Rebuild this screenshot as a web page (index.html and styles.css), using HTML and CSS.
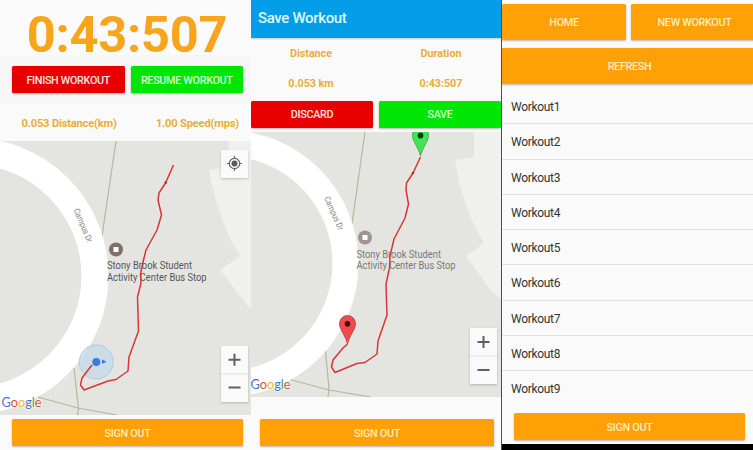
FILE: index.html
```
<!DOCTYPE html>
<html lang="en">
<head>
<meta charset="utf-8">
<title>Workout</title>
<link rel="stylesheet" href="styles.css">
</head>
<body>
<main class="screens">
  <section class="screen tracking">
    <div class="timer">0:43:507</div>
    <div class="actions">
      <button class="btn red"><span>FINISH WORKOUT</span></button>
      <button class="btn green"><span>RESUME WORKOUT</span></button>
    </div>
    <div class="stats"><span>0.053 Distance(km)</span><span>1.00 Speed(mps)</span></div>
    <svg class="map" viewBox="0 141 251 274" width="251" height="274">
      <rect class="land" x="0" y="141" width="251" height="274"/>
      <path class="plot" d="M229 141H251V310L220 270L240 256Q217 218 209 170L229 167Z"/>
      <path class="path" d="M116 141L102 236M74 368L78.500 409L77.500 415M38 397L78 408L117 415"/>
      <circle class="road" cx="-30" cy="276" r="125"/>
      <text class="street" transform="translate(73.500 210) rotate(67)" textLength="36" lengthAdjust="spacingAndGlyphs">Campus Dr</text>
      <circle class="stop" cx="116" cy="249.500" r="7"/>
      <rect class="stop-mark" x="113.500" y="247" width="5" height="5"/>
      <text class="place" x="107" y="269" textLength="85" lengthAdjust="spacingAndGlyphs">Stony Brook Student</text>
      <text class="place" x="107" y="280.500" textLength="99.500" lengthAdjust="spacingAndGlyphs">Activity Center Bus Stop</text>
      <circle class="accuracy" cx="96.300" cy="362" r="17"/>
      <path class="route" d="M173.500 165L165.500 183L159 193L158 200L161.500 215L157 230L146 250L143 262L140.500 274L141 283L137.500 297L138.500 331L129 357L128 371L116 379.500L108 381L84 390L80.500 385L82 378L92 365"/>
      <circle class="turn" cx="165.700" cy="182.500" r="1.300"/>
      <circle class="me" cx="96.300" cy="362" r="4"/>
      <path class="heading" d="M102 359.500L106.500 361.700L102 364Z"/>
      <text class="google" x="1.500" y="407" textLength="40" lengthAdjust="spacingAndGlyphs"><tspan class="gb">G</tspan><tspan class="gr">o</tspan><tspan class="gy">o</tspan><tspan class="gb">g</tspan><tspan class="gg">l</tspan><tspan class="gr">e</tspan></text>
      <g class="control">
        <rect x="221" y="150" width="27" height="28"/>
        <g class="locate"><circle cx="234.500" cy="163.500" r="5.200"/><path d="M234.500 156V159M234.500 168V171M227 163.500H230M239 163.500H242"/></g>
        <circle class="locate-dot" cx="234.500" cy="163.500" r="3"/>
      </g>
      <g class="control">
        <rect x="221" y="346" width="27" height="56"/>
        <path class="split" d="M221 374H248"/>
        <path class="sign" d="M228.500 359.700H240.500M234.500 353.700V365.700M228.500 387.500H240.500"/>
      </g>
    </svg>
    <div class="footer"><button class="btn orange"><span>SIGN OUT</span></button></div>
  </section>

  <section class="screen save">
    <header class="bar">Save Workout</header>
    <div class="summary">
      <span>Distance</span><span>Duration</span>
      <span>0.053 km</span><span>0:43:507</span>
    </div>
    <div class="actions">
      <button class="btn red"><span>DISCARD</span></button>
      <button class="btn green"><span>SAVE</span></button>
    </div>
    <svg class="map" viewBox="251 132 250 265" width="250" height="265">
      <rect class="land" x="251" y="132" width="250" height="265"/>
      <path class="plot" d="M474 132H501V299Q490 292 484 281L466 256L484 243Q462 208 455 160L474 157Z"/>
      <path class="path" d="M365 132L352 224M325.500 351L329 389L328 397M288 379L329 390L371 397"/>
      <circle class="road map-two" cx="225" cy="263.500" r="120.500"/>
      <text class="street" transform="translate(324 198) rotate(66)" textLength="36" lengthAdjust="spacingAndGlyphs">Campus Dr</text>
      <circle class="stop faded" cx="365" cy="237.500" r="7"/>
      <rect class="stop-mark" x="362.500" y="235" width="5" height="5"/>
      <text class="place faded-text" x="356.500" y="257.500" textLength="84.500" lengthAdjust="spacingAndGlyphs">Stony Brook Student</text>
      <text class="place faded-text" x="356.500" y="269" textLength="99" lengthAdjust="spacingAndGlyphs">Activity Center Bus Stop</text>
      <path class="route" d="M420.500 157L413 173L406.500 183L406 190L408.500 204L405 218L394 239L390 256L389.500 268L386 284L387 315L378 341L377 354L365 362.500L357 363.500L335 372.500L331.500 367L333 360L343 348L347.500 344"/>
      <circle class="turn" cx="413" cy="173" r="1.300"/>
      <path class="pin pin-green" d="M420.500 156C418.500 147 412.500 142 412.500 135A8 8 0 0 1 428.500 135C428.500 142 422.500 147 420.500 156Z"/>
      <circle class="pin-green-dot" cx="420.500" cy="135.500" r="2.900"/>
      <path class="pin pin-red" d="M347.500 344C345.500 335 339.500 330 339.500 323.500A8 8 0 0 1 355.500 323.500C355.500 330 349.500 335 347.500 344Z"/>
      <circle class="pin-red-dot" cx="347.500" cy="323.700" r="2.800"/>
      <text class="google" x="250.500" y="389" textLength="40" lengthAdjust="spacingAndGlyphs"><tspan class="gb">G</tspan><tspan class="gr">o</tspan><tspan class="gy">o</tspan><tspan class="gb">g</tspan><tspan class="gg">l</tspan><tspan class="gr">e</tspan></text>
      <g class="control">
        <rect x="470" y="328" width="27" height="56"/>
        <path class="split" d="M470 356H497"/>
        <path class="sign" d="M477.500 342H489.500M483.500 336V348M477.500 370H489.500"/>
      </g>
    </svg>
    <div class="footer"><button class="btn orange"><span>SIGN OUT</span></button></div>
  </section>

  <section class="screen history">
    <div class="nav">
      <button class="btn orange"><span>HOME</span></button>
      <button class="btn orange"><span>NEW WORKOUT</span></button>
    </div>
    <button class="btn orange refresh"><span>REFRESH</span></button>
    <ul class="list">
      <li>Workout1</li><li>Workout2</li><li>Workout3</li>
      <li>Workout4</li><li>Workout5</li><li>Workout6</li>
      <li>Workout7</li><li>Workout8</li><li>Workout9</li>
    </ul>
    <div class="footer"><button class="btn orange"><span>SIGN OUT</span></button></div>
  </section>
</main>
</body>
</html>
```

FILE: styles.css
```
* { box-sizing: border-box; }
body { margin: 0; background: #fafafa; font-family: Roboto, "Liberation Sans", sans-serif; }
.screens { display: grid; grid-template-columns: 251px 250px 252px; width: 753px; height: 450px; overflow: hidden; }
.screen { display: flex; flex-direction: column; height: 450px; min-width: 0; background: #fafafa; overflow: hidden; }

.btn { display: flex; align-items: center; justify-content: center; border: 0; padding: 2px 0 0; border-radius: 1.5px; font: 500 10.8px/1 Roboto, sans-serif; letter-spacing: -.32px; white-space: nowrap; color: #ffeed0; box-shadow: 0 1px 2px rgba(0,0,0,.28); }
.red { background: #e80000; color: #ffe6e2; }
.green { background: #00e604; color: #d8ffd0; }
.orange { background: #ffa006; color: #ffecb8; }
.tracking .actions .btn, .footer .btn { padding-top: 3px; }

.timer { height: 55px; padding-left: 3px; text-align: center; font-weight: 700; font-size: 50.5px; letter-spacing: -.2px; line-height: 69px; color: #f8a51b; }
.tracking .actions { display: flex; gap: 6px; height: 49px; padding: 11px 8px 11px 12px; background: #f6f6f6; }
.tracking .actions .btn { flex: 1; }
.stats { display: flex; justify-content: space-between; height: 37px; padding: 1px 12px 0 21.500px; align-items: center; font-size: 11.200px; letter-spacing: -.22px; font-weight: 700; color: #e9ae38; }
.map { display: block; flex: none; }

.land { fill: #e4e5e0; }
.plot { fill: #f0f0ef; }
.path { fill: none; stroke: #b7b79f; stroke-width: 1.2; }
.road { fill: none; stroke: #fff; stroke-width: 27; }
.map-two { stroke-width: 26; }
.street { font-size: 8.5px; fill: #85857f; }
.place { font-size: 10.6px; fill: #55565a; }
.faded-text { fill: #77787a; }
.stop { fill: #816e68; }
.faded { fill: #a09490; }
.stop-mark { fill: #fff; }
.route { fill: none; stroke: #d93636; stroke-width: 1.5; stroke-linejoin: round; }
.turn { fill: #b52e2e; }
.accuracy { fill: #bfd9ea; fill-opacity: .68; stroke: #a5c3d6; stroke-width: .8; }
.me { fill: #3f78e0; }
.heading { fill: #3f78e0; }
.google { font: 400 13.500px Lato, sans-serif; paint-order: stroke; stroke: #fff; stroke-width: 1px; }
.gb { fill: #4179cc; }
.gr { fill: #dc4c3e; }
.gy { fill: #edba2e; }
.gg { fill: #43a15d; }
.control rect { fill: #fafafa; filter: drop-shadow(0 1px 1px rgba(0,0,0,.22)); }
.locate { fill: none; stroke: #666; stroke-width: 1.2; }
.locate-dot { fill: #5b5b5b; }
.split { stroke: #e2e2e2; stroke-width: 1; }
.sign { stroke: #606060; stroke-width: 2; }
.pin { stroke-width: .8; }
.pin-green { fill: #42e356; stroke: #30a83e; }
.pin-green-dot { fill: #0b3b12; }
.pin-red { fill: #f04a4c; stroke: #b93a3c; }
.pin-red-dot { fill: #4c080b; }

.bar { display: flex; align-items: center; height: 38px; padding: 0 0 2px 7px; background: #049de8; color: #dcfaff; font-size: 15px; letter-spacing: -.35px; font-weight: 500; box-shadow: 0 1px 2px rgba(0,0,0,.2); }
.summary { display: grid; grid-template-columns: 120px 140px; grid-template-rows: 31px 28px; height: 63px; align-items: center; text-align: center; color: #e9ae38; font-size: 10.800px; letter-spacing: -.05px; font-weight: 700; }
.save .actions { display: grid; grid-template-columns: 122px 122px; gap: 6px; height: 31px; padding-bottom: 4px; }
.save .actions .btn { width: 122px; }

.tracking .footer { padding: 4px 8px 4px 12px; }
.save .footer { padding: 22px 7px 4px 9px; }
.footer .btn { width: 100%; height: 27px; }

.history { border-left: 1px solid #4d4d4d; }
.nav { display: grid; grid-template-columns: 124px 127px; gap: 5px; padding-top: 4px; height: 40px; }
.history .btn { flex: none; }
.refresh { height: 36px; margin-top: 8px; padding-top: 3px; padding-left: 4px; border-radius: 0; }
.list { list-style: none; margin: 5px 0 0; padding: 0; }
.list li { height: 35.250px; padding-left: 9px; line-height: 36px; font-size: 12px; letter-spacing: -.3px; color: #333; border-bottom: 1px solid #e2e2e2; }
.list li:last-child { border-bottom: 0; height: 33px; }
.history .footer { height: 37px; padding: 0 8px 4px 12px; margin-top: auto; border-bottom: 6px solid #000; }
```
